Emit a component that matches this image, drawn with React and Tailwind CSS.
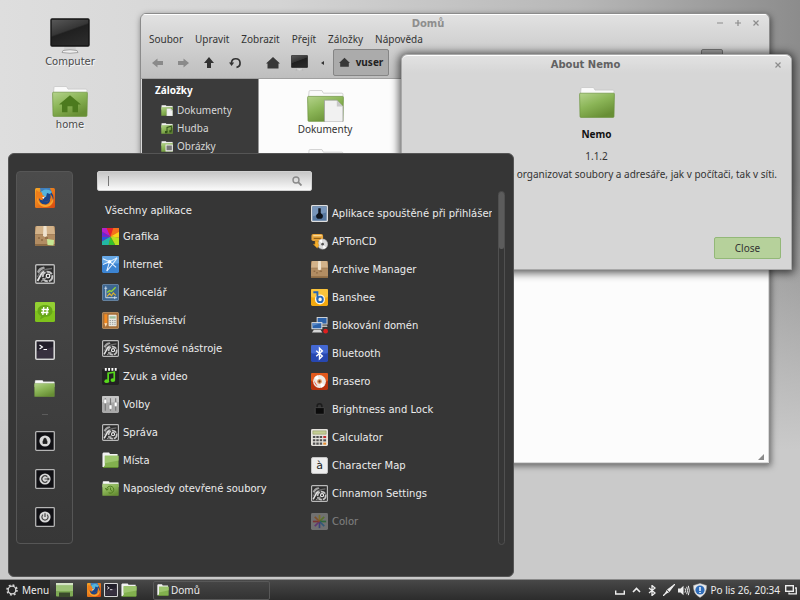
import React from 'react';

const Firefox = ({ size }) => (
  <svg width={size} height={size} viewBox="0 0 20 20">
    <defs>
      <linearGradient id="fxBg" x1="0" y1="0" x2="1" y2="1">
        <stop offset="0" stopColor="#f7a928" />
        <stop offset="1" stopColor="#d9480f" />
      </linearGradient>
    </defs>
    <rect width="20" height="20" rx="1.5" fill="url(#fxBg)" />
    <path d="M5 0H15L17 5L13 9L6 6Z" fill="#3f7fbe" />
    <circle cx="10.5" cy="10" r="8" fill="#1b4486" />
    <path d="M5 5C7 1 13 0 17 4L15 6L12 5L11 9L7 9Z" fill="#54b4dd" />
    <path d="M1 2L4 4L7 4.500L7.500 7L10 8.500L8 10L7.500 12C8.500 14 12 14.500 14 12.500C16 10.500 16 8 15 6C18 8 19 13 15.500 16.500C11 20 3 18.500 1.500 13C.5 9 1 5 1 2Z" fill="#ef7d1a" />
    <path d="M8.500 12C9.500 14.500 13.500 14 15 11C15.500 14 13 16.500 10 16.500C6 16.500 4 13 4 10C5 12 7 12.500 8.500 12Z" fill="#1b4486" />
    <path d="M2 9C3 14 6 17 11 17C14 17 17 14 18 10C19.500 15 15 19.500 10 19C5 18.500 1.500 14 2 9Z" fill="#f9a52e" />
    <path d="M7 9.500L10 8.500L8.500 11Z" fill="#fff" />
  </svg>
);

const Box = ({ size, note }) => (
  <svg width={size} height={size} viewBox="0 0 20 20">
    <rect width="20" height="20" rx="1.5" fill="#b28d63" />
    <path d="M1.500 0H18.500L20 8H0Z" fill="#d3b38a" />
    <path d="M0 8H20V9H0Z" fill="#a5825a" />
    <path d="M8.500 0H11.500L12 10L10 11L8 10Z" fill="#efe3cf" />
    <path d="M3 12H5M6 14H8M10 12H13" stroke="#7a5632" strokeWidth="1" />
    <path d="M0 18H20V18.500A1.500 1.500 0 0 1 18.500 20H1.500A1.500 1.500 0 0 1 0 18.500Z" fill="#8e6c45" />
    {note && <path d="M12 13L19 14L18.500 19.500L12.500 19Z" fill="#c6e693" />}
  </svg>
);

const Gears = ({ size }) => (
  <svg width={size} height={size} viewBox="0 0 20 20">
    <rect x=".7" y=".7" width="18.6" height="18.6" rx="1" fill="#2c2c2c" stroke="#b9b9b9" strokeWidth="1.4" />
    <path d="M2 8C3 5 5 3 9 2.500L10 4.500C8 5 5.500 6 4 9.500Z" fill="#a5a5a5" />
    <path d="M2.500 13C5 7 9 5 17 4.500" fill="none" stroke="#6f6f6f" strokeWidth="1.300" />
    <path d="M2.500 17L6.500 9.500L9 7.500" fill="none" stroke="#e2e2e2" strokeWidth="1.800" />
    <circle cx="12.500" cy="12.500" r="4.800" fill="none" stroke="#c4c4c4" strokeWidth="2" strokeDasharray="6 1" />
    <circle cx="13" cy="12" r="1.800" fill="none" stroke="#eee" strokeWidth="1.300" />
    <path d="M6 17.500L11.500 13.500" stroke="#9a9a9a" strokeWidth="1.400" />
  </svg>
);

const Chat = ({ size }) => (
  <svg width={size} height={size} viewBox="0 0 20 20">
    <rect width="20" height="20" rx="1.500" fill="#7fc31c" />
    <rect width="20" height="9" rx="1.500" fill="#93d032" />
    <path d="M10 3C14.500 3 17.500 5.500 17.500 9C17.500 12.500 14.500 14.800 10 14.800L5 17.500L6 14C4 13 2.500 11.500 2.500 9C2.500 5.500 5.500 3 10 3Z" fill="#68a818" />
    <path d="M8.800 5L7.800 13M12.600 5L11.600 13M6.500 7.500H14M6 10.500H13.500" stroke="#fff" strokeWidth="1.300" />
  </svg>
);

const Terminal = ({ size }) => (
  <svg width={size} height={size} viewBox="0 0 20 20">
    <rect x=".8" y=".8" width="18.400" height="18.400" rx="1" fill="#221f2a" stroke="#d6d6d6" strokeWidth="1.600" />
    <path d="M2 11L18 7V18H2Z" fill="#37303f" />
    <path d="M4.500 5L7.500 7L4.500 9M8.500 9.500H12" fill="none" stroke="#fff" strokeWidth="1.100" />
  </svg>
);

const Power = ({ size, kind }) => (
  <svg width={size} height={size} viewBox="0 0 20 20">
    <rect x=".7" y=".7" width="18.600" height="18.600" rx=".8" fill="#101014" stroke="#b5b5b5" strokeWidth="1.300" />
    <circle cx="10" cy="10" r="5.600" fill="#d9d9d9" />
    {kind === 'lock' && <path d="M8 9.800H12V12.500H8ZM8.700 9.800V8.500A1.300 1.300 0 0 1 11.300 8.500V9.800" fill="#222" stroke="#222" strokeWidth=".8" />}
    {kind === 'logout' && <path d="M12.300 7.700A3.200 3.200 0 1 0 12.300 12.300M9.500 10H14M12.500 8.600L14 10L12.500 11.400" fill="none" stroke="#444" strokeWidth="1.200" />}
    {kind === 'off' && <path d="M8 7.600A3.100 3.100 0 1 0 12 7.600M10 6.200V10" fill="none" stroke="#444" strokeWidth="1.200" />}
  </svg>
);

const Folder = ({ w, h, kind }) => (
  <svg width={w} height={h} viewBox="0 0 36 30" preserveAspectRatio="none">
    <defs>
      <linearGradient id="folderGreen" x1="0" y1="0" x2=".6" y2="1">
        <stop offset="0" stopColor="#b4d38b" />
        <stop offset=".5" stopColor="#8bb557" />
        <stop offset="1" stopColor="#688f35" />
      </linearGradient>
    </defs>
    <path d="M2 1.500Q2 .5 3 .5H14.500L16 3H34Q35 3 35 4V12H1Z" fill="#fafafa" stroke="#c4c4c4" strokeWidth=".7" />
    <path d="M.6 7Q.5 6 1.500 6H34.500Q35.500 6 35.400 7L35 28.500Q35 29.400 34 29.400H2Q1 29.400 1 28.500Z" fill="url(#folderGreen)" stroke="#6d9440" strokeWidth=".7" />
    {kind === 'home' && <path d="M18 9L29 18H26V25.500H20.500V19.500H15.500V25.500H10V18H7Z" fill="#4c7a1e" />}
    {kind === 'doc' && <path d="M17 9.500H29L35 15.500V30H17Z" fill="#f1f1f1" stroke="#9b9b9b" strokeWidth=".7" />}
    {kind === 'doc' && <path d="M29 9.500V15.500H35Z" fill="#c8c8c8" />}
    {kind === 'music' && <path d="M18 25V12L31 9V22" fill="none" stroke="#33521a" strokeWidth="3" />}
    {kind === 'music' && <path d="M12 22H19V28H12ZM25 20H32V26H25Z" fill="#33521a" />}
    {kind === 'photo' && <path d="M15 11H34V27H15Z" fill="#777" stroke="#eee" strokeWidth="3" />}
    {kind === 'recent' && <path d="M10 18A7.500 7 0 1 1 14 23.500M7 14L10 18.500L14 15.500M18 13V18L21 20" fill="none" stroke="#4c7a1e" strokeWidth="2" />}
  </svg>
);

const PlaceFolder = ({ w, h }) => (
  <svg width={w} height={h} viewBox="0 0 18 17" preserveAspectRatio="none">
    <path d="M.5 1.500L1.500 .5H7.500L8.500 2H16.500V16H.5Z" fill="#f2f2f2" />
    <path d="M3 4H17.500V15.500Q17.500 16.500 16.500 16.500H1.500L3 14Z" fill="#82b04e" />
    <path d="M3 4H17.500V9L3 12Z" fill="#9cc56d" />
    <path d="M1 16.500H17" stroke="#5c8a2d" />
  </svg>
);

const Monitor = ({ w, h }) => (
  <svg width={w} height={h} viewBox="0 0 40 36" preserveAspectRatio="none">
    <defs>
      <linearGradient id="screen" x1="0" y1="0" x2=".5" y2="1">
        <stop offset="0" stopColor="#5a5a5a" />
        <stop offset=".5" stopColor="#363636" />
        <stop offset=".55" stopColor="#202020" />
        <stop offset="1" stopColor="#2a2a2a" />
      </linearGradient>
    </defs>
    <path d="M14.500 27H25.500L26 33H14Z" fill="#cfcfcf" />
    <path d="M13 32.500Q20 31 27 32.500L28 34.500Q20 36 12 34.500Z" fill="#efefef" stroke="#8a8a8a" strokeWidth=".7" />
    <rect x="1" y="1" width="38" height="27" rx="1" fill="url(#screen)" stroke="#151515" strokeWidth="1.400" />
  </svg>
);

const House = ({ size }) => (
  <svg width={size} height={size} viewBox="0 0 14 14">
    <path d="M7 1L14 7.500H12.500V12.500H1.500V7.500H0Z" fill="#383838" />
  </svg>
);

const Wheel = () => (
  <svg width="17" height="17" viewBox="0 0 18 18">
    <rect width="18" height="18" rx="1.500" fill="#e22" />
    <path d="M9 9L0 4V0H5Z" fill="#b421c9" />
    <path d="M9 9L5 0H12Z" fill="#e3242b" />
    <path d="M9 9L12 0H18V4Z" fill="#f2711c" />
    <path d="M9 9L18 4V10Z" fill="#f8d21c" />
    <path d="M9 9L18 10V18H14Z" fill="#b8e01f" />
    <path d="M9 9L14 18H7Z" fill="#35c22e" />
    <path d="M9 9L7 18H0V14Z" fill="#22b8a4" />
    <path d="M9 9L0 14V9Z" fill="#2a52e0" />
    <path d="M9 9L0 9V4Z" fill="#6a25d8" />
  </svg>
);

const Net = () => (
  <svg width="17" height="17" viewBox="0 0 18 18">
    <rect width="18" height="18" rx="1.500" fill="#3c84d2" />
    <rect width="18" height="8" rx="1.500" fill="#67a8e6" />
    <path d="M1 3L8 6L16 2M8 6L5 16M8 6L15 12M16 2L11 9L5 16M1 9L8 6" fill="none" stroke="#e6f2ff" strokeWidth="1.100" />
    <circle cx="8" cy="6" r="1.800" fill="#fff" />
  </svg>
);

const Office = () => (
  <svg width="17" height="17" viewBox="0 0 18 18">
    <rect x=".4" y=".4" width="17.200" height="17.200" rx="1.500" fill="#3d6690" stroke="#7b9cbc" strokeWidth=".8" />
    <path d="M4 2.500V14.500H16M2.500 4.500H5.500M13.500 13V16" fill="none" stroke="#cfdcea" strokeWidth="1" />
    <path d="M5.500 9L8 7L10 8L14.500 3.500" fill="none" stroke="#97d637" strokeWidth="1.400" />
    <path d="M5.500 13L8 10L10 12.500L12 9.500L14.500 12" fill="none" stroke="#dfb22e" strokeWidth="1.200" />
  </svg>
);

const Accessories = () => (
  <svg width="17" height="17" viewBox="0 0 18 18">
    <rect x=".4" y=".4" width="17.200" height="17.200" rx="1.500" fill="#a8713b" stroke="#d2a36e" strokeWidth=".8" />
    <path d="M2.500 2.500H5.500V12L4 15.500L2.500 12Z" fill="#f58a1f" />
    <path d="M2.500 12H5.500L4 15.500Z" fill="#f8e2c0" />
    <rect x="7" y="3" width="8.500" height="12" rx=".8" fill="#e8e8e0" />
    <path d="M8 4.500H14.500V7H8Z" fill="#9ebf9b" />
    <path d="M8 9H14.500M8 11H14.500M8 13H14.500" stroke="#999" strokeWidth="1" strokeDasharray="1.500 1" />
  </svg>
);

const Media = () => (
  <svg width="17" height="17" viewBox="0 0 18 18">
    <rect y="1" width="18" height="17" rx="1.500" fill="#222" />
    <path d="M3 1.500H16" stroke="#fff" strokeWidth="3" strokeDasharray="2 1.500" />
    <path d="M6.500 14V5.500L13 4.500V12.500" fill="none" stroke="#57d81c" strokeWidth="1.800" />
    <ellipse cx="5" cy="14" rx="2.500" ry="2" fill="#57d81c" />
    <ellipse cx="11.500" cy="12.800" rx="2.500" ry="2" fill="#57d81c" />
  </svg>
);

const Mixer = () => (
  <svg width="17" height="17" viewBox="0 0 18 18">
    <rect width="18" height="18" rx="1.500" fill="#a9a9a9" />
    <rect width="18" height="7" rx="1.500" fill="#c6c6c6" />
    <path d="M3.500 2.500V15.500M9 2.500V15.500M14.500 2.500V15.500" stroke="#777" strokeWidth="1.200" />
    <path d="M2 3.500H5V8H2ZM7.500 9.500H10.500V14H7.500ZM13 6.500H16V11H13Z" fill="#fff" stroke="#8a8a8a" strokeWidth=".5" />
  </svg>
);

const Startup = () => (
  <svg width="17" height="17" viewBox="0 0 18 18">
    <rect x=".7" y=".7" width="16.600" height="16.600" rx=".8" fill="#56779f" stroke="#dedede" strokeWidth="1.400" />
    <path d="M2 2H16V8L2 12Z" fill="#7795ba" />
    <path d="M7.700 3.500H10.300V8.500L12.500 10.500V13L11 14.500H7L5.500 13V10.500L7.700 8.500Z" fill="#0f141c" />
  </svg>
);

const AptOnCd = () => (
  <svg width="18" height="17" viewBox="0 0 19 18">
    <rect x=".5" y=".5" width="13" height="8" rx="2" fill="#e8a53a" />
    <path d="M2.500 2.500H12" stroke="#fbe0a4" strokeWidth="1.200" />
    <path d="M3 5.500H11" stroke="#8b5a14" strokeWidth="1.200" />
    <circle cx="13" cy="12" r="5.700" fill="#dcdcdc" stroke="#a8a8a8" strokeWidth=".6" />
    <path d="M13 12L9 8L12 6.500ZM13 12L17 16L14 17.500Z" fill="#fff" />
    <circle cx="13" cy="12" r="1.500" fill="#555" />
    <path d="M4.500 8.500V12H2.500L7 16.500L9 13L8 12V8.500Z" fill="#f5b02c" stroke="#b87714" strokeWidth=".5" />
  </svg>
);

const Banshee = () => (
  <svg width="17" height="17" viewBox="0 0 18 18">
    <rect width="18" height="18" rx="1.500" fill="#f3a90f" />
    <rect width="18" height="9" rx="1.500" fill="#fac43c" />
    <circle cx="9.500" cy="11" r="5.300" fill="#fdf6e6" />
    <path d="M2.500 3.500H6.800V11" fill="none" stroke="#2566b8" strokeWidth="2" />
    <circle cx="9.600" cy="11" r="2.900" fill="none" stroke="#2566b8" strokeWidth="2" />
  </svg>
);

const Domains = () => (
  <svg width="18" height="18" viewBox="0 0 18 18">
    <path d="M6 .5H17.500V8.500H6Z" fill="#dadada" />
    <path d="M7 1.500H16.500V7.500H7Z" fill="#2c62aa" />
    <path d="M9 9.500H17L17.500 11H9Z" fill="#bbb" />
    <path d="M.5 6H12V13.500H.5Z" fill="#e8e8e8" />
    <path d="M1.500 7H11V12.500H1.500Z" fill="#2c62aa" />
    <path d="M1.500 7H11L1.500 10Z" fill="#5c8bc9" />
    <path d="M3 14H10L12 17H1Z" fill="#d4d4d4" />
    <circle cx="15.500" cy="15.500" r="2.500" fill="#dd1f1f" />
  </svg>
);

const BluetoothTile = () => (
  <svg width="17" height="17" viewBox="0 0 18 18">
    <rect width="18" height="18" rx="1.500" fill="#2747b0" />
    <rect width="18" height="9" rx="1.500" fill="#4468d2" />
    <path d="M5.500 6L12 11.700L9 14.700V3.300L12 6.300L5.500 12" fill="none" stroke="#fff" strokeWidth="1.500" />
  </svg>
);

const Brasero = () => (
  <svg width="17" height="17" viewBox="0 0 18 18">
    <rect width="18" height="18" rx="1.500" fill="#b8320d" />
    <rect width="18" height="9" rx="1.500" fill="#e2591c" />
    <circle cx="9" cy="9" r="6.800" fill="#eee9e4" />
    <path d="M9 9L3.500 5A6.800 6.800 0 0 1 7 2.500ZM9 9L14.500 13A6.800 6.800 0 0 1 11 15.500Z" fill="#fff" />
    <circle cx="9" cy="9" r="2.600" fill="#e29a64" />
    <circle cx="9" cy="9" r="1.200" fill="#7a3a1a" />
    <path d="M3.500 8C3.500 11 5 13 7 14C6 12 4.500 11 3.500 8Z" fill="#e8301a" />
  </svg>
);

const Padlock = () => (
  <svg width="17" height="17" viewBox="0 0 18 18">
    <path d="M6.500 8V5.500A2.500 2.500 0 0 1 11.500 5.500V8" fill="none" stroke="#1c1c1c" strokeWidth="1.600" />
    <rect x="4.500" y="7" width="9.500" height="7" rx=".8" fill="#0b0b0b" stroke="#5a5a5a" strokeWidth=".7" />
  </svg>
);

const Calc = () => (
  <svg width="17" height="17" viewBox="0 0 18 18">
    <rect width="18" height="18" rx="1.500" fill="#e4e2dc" />
    <path d="M2 2H16V5.500H2Z" fill="#c3cd92" stroke="#8d9663" strokeWidth=".6" />
    <path d="M2 8.500H12.500M2 12H12.500M2 15.500H12.500" stroke="#4e4e4e" strokeWidth="2.200" strokeDasharray="2.600 1" />
    <path d="M13 8.500H16" stroke="#c22f2f" strokeWidth="2.200" />
    <path d="M13 12H16" stroke="#4e4e4e" strokeWidth="2.200" />
    <path d="M13 15.500H16" stroke="#e58a2c" strokeWidth="2.200" />
  </svg>
);

const CharMap = () => (
  <span className="flex h-[17px] w-[17px] items-center justify-center rounded-[2px] border border-[#c4c4c4] bg-[#ededed] text-[11px] leading-none text-[#222] [text-shadow:none]" aria-hidden="true">à</span>
);

const ColorIcon = () => (
  <svg width="17" height="17" viewBox="0 0 18 18">
    <rect width="18" height="18" rx="1.500" fill="#c9c9c9" />
    <path d="M9 9V2" stroke="#e8c21c" strokeWidth="1.800" />
    <path d="M9 9L14 4" stroke="#8ecf1f" strokeWidth="1.800" />
    <path d="M9 9H16" stroke="#27b047" strokeWidth="1.800" />
    <path d="M9 9L14 14" stroke="#2a8fd8" strokeWidth="1.800" />
    <path d="M9 9V16" stroke="#4653d8" strokeWidth="1.800" />
    <path d="M9 9L4 14" stroke="#a236c9" strokeWidth="1.800" />
    <path d="M9 9H2" stroke="#e0312b" strokeWidth="1.800" />
    <path d="M9 9L4 4" stroke="#f07a1e" strokeWidth="1.800" />
  </svg>
);

const categories = [
  { name: 'Grafika', icon: <Wheel /> },
  { name: 'Internet', icon: <Net /> },
  { name: 'Kancelář', icon: <Office /> },
  { name: 'Příslušenství', icon: <Accessories /> },
  { name: 'Systémové nástroje', icon: <Gears size={17} /> },
  { name: 'Zvuk a video', icon: <Media /> },
  { name: 'Volby', icon: <Mixer /> },
  { name: 'Správa', icon: <Gears size={17} /> },
  { name: 'Místa', icon: <PlaceFolder w={17} h={16} /> },
  { name: 'Naposledy otevřené soubory', icon: <Folder w={17} h={15} kind="recent" /> },
];

const apps = [
  { name: 'Aplikace spouštěné při přihlášení', icon: <Startup /> },
  { name: 'APTonCD', icon: <AptOnCd /> },
  { name: 'Archive Manager', icon: <Box size={17} /> },
  { name: 'Banshee', icon: <Banshee /> },
  { name: 'Blokování domén', icon: <Domains /> },
  { name: 'Bluetooth', icon: <BluetoothTile /> },
  { name: 'Brasero', icon: <Brasero /> },
  { name: 'Brightness and Lock', icon: <Padlock /> },
  { name: 'Calculator', icon: <Calc /> },
  { name: 'Character Map', icon: <CharMap /> },
  { name: 'Cinnamon Settings', icon: <Gears size={17} /> },
  { name: 'Color', icon: <ColorIcon />, faded: true },
];

const favorites = [
  { name: 'Firefox', icon: <Firefox size={20} /> },
  { name: 'Software', icon: <Box size={20} note /> },
  { name: 'Settings', icon: <Gears size={20} /> },
  { name: 'XChat', icon: <Chat size={20} /> },
  { name: 'Terminal', icon: <Terminal size={20} /> },
  { name: 'Nemo', icon: <Folder w={21} h={17} /> },
];

const session = [
  { name: 'Lock', icon: <Power size={20} kind="lock" /> },
  { name: 'Logout', icon: <Power size={20} kind="logout" /> },
  { name: 'Quit', icon: <Power size={20} kind="off" /> },
];

const DesktopIcons = () => (
  <div className="ml-9 flex w-[68px] flex-col items-center pt-[18px] font-['DejaVu_Sans',sans-serif] text-[10px] leading-4 text-[#4a4a4a] [text-shadow:1px_1px_1px_#fff]">
    <Monitor w={40} h={36} />
    <span>Computer</span>
    <div className="h-4" />
    <Folder w={36} h={31} kind="home" />
    <span>home</span>
  </div>
);

const TitleButton = ({ label, d }) => (
  <button aria-label={label} className="flex h-4 w-[18px] items-center justify-center">
    <svg width="8" height="8" viewBox="0 0 8 8">
      <path d={d} fill="none" stroke="#8c8c8c" strokeWidth="1.2" />
    </svg>
  </button>
);

const ToolButton = ({ label, children }) => (
  <button aria-label={label} className="flex h-7 w-[26px] items-center justify-center">
    {children}
  </button>
);

const FileManager = () => (
  <section className="absolute top-[13px] left-[140px] z-10 flex h-[451px] w-[630px] flex-col overflow-hidden rounded-t-md border border-[#8b8b8b] bg-linear-to-b from-[#e2e2e2] to-[#bdbdbd] to-[66px] shadow-[1px_2px_6px_rgba(0,0,0,0.5)]">
    <header className="flex h-[17px] items-center border-t border-white pr-1">
      <h2 className="flex-1 pl-1 text-center font-['DejaVu_Sans',sans-serif] text-[10px] font-bold text-[#8e8e8e]">Domů</h2>
      <TitleButton label="Minimize" d="M1 4H7" />
      <TitleButton label="Maximize" d="M1 4H7M4 1V7" />
      <TitleButton label="Close" d="M1.500 1.500L6.500 6.500M6.500 1.500L1.500 6.500" />
    </header>
    <nav className="flex h-4 items-center gap-3 pl-2">
      {['Soubor', 'Upravit', 'Zobrazit', 'Přejít', 'Záložky', 'Nápověda'].map((item) => (
        <button key={item}>{item}</button>
      ))}
    </nav>
    <div className="flex h-8 items-center border-b border-[#a0a0a0] pl-[3px]">
      <ToolButton label="Back">
        <svg width="11" height="10" viewBox="0 0 11 10"><path d="M0 5L5.500 .5V3H11V7H5.500V9.500Z" fill="#8a8a8a" /></svg>
      </ToolButton>
      <ToolButton label="Forward">
        <svg width="11" height="10" viewBox="0 0 11 10"><path d="M11 5L5.500 .5V3H0V7H5.500V9.500Z" fill="#8a8a8a" /></svg>
      </ToolButton>
      <ToolButton label="Up">
        <svg width="10" height="11" viewBox="0 0 10 11"><path d="M5 0L10 6H7V11H3V6H0Z" fill="#333" /></svg>
      </ToolButton>
      <ToolButton label="Reload">
        <svg width="13" height="12" viewBox="0 0 13 12">
          <path d="M2.500 7V5.500A4.300 4.300 0 1 1 7.500 10.300" fill="none" stroke="#333" strokeWidth="1.700" />
          <path d="M0 5.500H5.200L2.600 9Z" fill="#333" />
        </svg>
      </ToolButton>
      <div className="w-3" />
      <ToolButton label="Home"><House size={14} /></ToolButton>
      <ToolButton label="Computer"><Monitor w={17} h={16} /></ToolButton>
      <button aria-label="Previous" className="flex h-7 w-[21px] items-center justify-center">
        <svg width="3" height="4" viewBox="0 0 3 4"><path d="M3 0V4L0 2Z" fill="#333" /></svg>
      </button>
      <button className="flex h-[27px] w-14 items-center justify-center gap-1.5 rounded-xs border border-[#858585] bg-[#ababab] font-bold text-[#222]">
        <House size={11} />
        vuser
      </button>
      <button aria-label="Search" className="mr-[46px] ml-auto h-[27px] w-[22px] rounded-xs border border-[#777] bg-[#a5a5a5]" />
    </div>
    <div className="flex min-h-0 flex-1 border-x border-b border-[#d8d8d8]">
      <aside className="w-[117px] border-r border-[#999] bg-[#3b3b3b] pt-0.5 text-[#d8d8d8]">
        <h3 className="mb-0.5 pl-[13px] leading-[18px] font-bold text-white">Záložky</h3>
        {[['Dokumenty', 'doc'], ['Hudba', 'music'], ['Obrázky', 'photo']].map(([name, kind]) => (
          <a key={name} href="#" className="flex h-[18px] items-center gap-1 pl-[19px]">
            <Folder w={12} h={11} kind={kind} />
            {name}
          </a>
        ))}
      </aside>
      <div className="relative flex flex-1 flex-col bg-[#fcfcfc]">
        <a href="#" className="flex w-[132px] flex-col items-center pt-[11px] leading-[15px] text-[#333]">
          <Folder w={37} h={32} kind="doc" />
          Dokumenty
        </a>
        <div className="flex w-[132px] flex-col items-center pt-3">
          <Folder w={37} h={32} />
        </div>
        <svg className="absolute right-1 bottom-0.5" width="6" height="6" viewBox="0 0 6 6"><path d="M6 0V6H0Z" fill="#8a8a8a" /></svg>
      </div>
    </div>
  </section>
);

const AboutDialog = () => (
  <section className="absolute top-[54px] left-[401px] z-20 flex h-[216px] w-[391px] flex-col rounded-t-md border border-[#a9a9a9] bg-[#d6d6d6] text-[#333] shadow-[0_1px_8px_2px_rgba(0,0,0,0.65)]">
    <header className="flex h-[18px] items-center rounded-t-md border-t border-white bg-linear-to-b from-[#e2e2e2] to-[#d6d6d6] pr-1">
      <h2 className="flex-1 text-center font-['DejaVu_Sans',sans-serif] text-[10px] font-bold text-[#626262]">About Nemo</h2>
      <TitleButton label="Close" d="M1.500 1.500L6.500 6.500M6.500 1.500L1.500 6.500" />
    </header>
    <div className="flex flex-col items-center pt-3.5">
      <Folder w={36} h={31} />
      <h3 className="mt-2 leading-4 font-bold text-[#111]">Nemo</h3>
      <p className="mt-1.5 leading-4">1.1.2</p>
      <p className="mt-0.5 self-end pr-3.5 leading-4 whitespace-nowrap">Nemo vám umožňuje organizovat soubory a adresáře, jak v počítači, tak v síti.</p>
    </div>
    <button className="mt-auto mr-[10px] mb-[10px] h-[22px] w-[67px] self-end rounded-xs border border-[#93b878] bg-[#b6d19b]">Close</button>
  </section>
);

const StartMenu = () => (
  <section className="absolute bottom-0.5 left-2 z-30 flex h-[424px] w-[506px] rounded-md border border-[#555] bg-[#363636] font-['DejaVu_Sans',sans-serif] text-[#ececec] [text-shadow:0_1px_1px_#000]">
    <div className="mt-[17px] ml-[7px] flex h-[373px] w-[57px] flex-col items-center rounded-sm border border-[#565656] bg-linear-to-b from-[#4b4b4b] to-[#373737] pt-[7px]">
      {favorites.map((f) => (
        <button key={f.name} aria-label={f.name} className="flex h-[38px] w-full items-center justify-center">{f.icon}</button>
      ))}
      <hr className="my-[7px] w-1.5 border-[#5c5c5c]" />
      {session.map((f) => (
        <button key={f.name} aria-label={f.name} className="flex h-[38px] w-full items-center justify-center">{f.icon}</button>
      ))}
    </div>
    <div className="ml-6 flex flex-1 flex-col pt-[17px]">
      <label className="flex h-5 w-[215px] items-center rounded-xs border border-[#d0d0d0] bg-linear-to-b from-[#c6c6c6] to-[#fafafa] pr-[9px] pl-[10px]">
        <span className="h-2.5 w-px bg-[#777]" />
        <input type="text" aria-label="Search" className="w-full min-w-0 flex-1 text-[#333] outline-none" />
        <svg width="10" height="10" viewBox="0 0 10 10">
          <circle cx="4" cy="4" r="3" fill="none" stroke="#8a8a8a" strokeWidth="1.400" />
          <path d="M6.200 6.200L9.500 9.500" stroke="#8a8a8a" strokeWidth="1.800" />
        </svg>
      </label>
      <div className="flex h-[354px]">
        <div className="flex w-[214px] flex-col pt-[7px]">
          <button className="h-6 pl-2 text-left">Všechny aplikace</button>
          {categories.map((c) => (
            <button key={c.name} className="flex h-7 items-center gap-1 pl-[5px] text-left whitespace-nowrap">
              <span className="flex w-[17px] justify-center">{c.icon}</span>
              {c.name}
            </button>
          ))}
        </div>
        <div className="flex w-[181px] flex-col overflow-hidden pt-2">
          {apps.map((a) => (
            <button key={a.name} className={'flex h-7 shrink-0 items-center gap-1 text-left whitespace-nowrap' + (a.faded ? ' opacity-40' : '')}>
              <span className="flex w-[17px] shrink-0 justify-center">{a.icon}</span>
              {a.name}
            </button>
          ))}
        </div>
        <div className="ml-1.5 w-[7px] rounded-full border border-[#505050]">
          <div className="h-[57px] rounded-xs bg-[#5c5c5c]" />
        </div>
      </div>
    </div>
  </section>
);

const Taskbar = () => (
  <footer className="flex h-[21px] items-center border-t border-[#8a8a8a] bg-linear-to-b from-[#484848] to-[#2c2c2c] text-[#ececec]">
    <button className="flex h-full w-[50px] items-center gap-1 bg-[#262626] pl-1.5">
      <svg width="12" height="12" viewBox="0 0 12 12">
        <circle cx="6" cy="6" r="5" fill="none" stroke="#d5d5d5" strokeWidth="1.600" strokeDasharray="1.900 2.027" />
        <circle cx="6" cy="6" r="3.800" fill="none" stroke="#d5d5d5" strokeWidth="1.300" />
      </svg>
      Menu
    </button>
    <button aria-label="Show desktop" className="ml-1.5">
      <svg width="17" height="14" viewBox="0 0 17 14">
        <rect width="17" height="13.500" rx=".8" fill="#7fab55" />
        <path d="M0 0H17V2.500H0Z" fill="#d5e3c6" />
        <path d="M0 2.500H17V8H0Z" fill="#9cc276" />
        <path d="M3 9.500H14V14H3Z" fill="#3a4a2b" />
      </svg>
    </button>
    <div className="ml-3.5 flex items-center gap-[3px]">
      <button aria-label="Firefox"><Firefox size={14} /></button>
      <button aria-label="Terminal"><Terminal size={14} /></button>
      <button aria-label="Files"><PlaceFolder w={16} h={14} /></button>
    </div>
    <button className="ml-4 flex h-[19px] w-[117px] items-center gap-0.5 rounded-xs border border-[#585858] bg-linear-to-b from-[#454545] to-[#333] pl-[3px]">
      <PlaceFolder w={12} h={12} />
      Domů
    </button>
    <div className="ml-auto flex items-center gap-[7px] pr-[3px]">
      <svg width="10" height="10" viewBox="0 0 10 10"><path d="M.7 5.500V9H9.300V5.500" fill="none" stroke="#eee" strokeWidth="1.400" /></svg>
      <svg width="9" height="6" viewBox="0 0 9 6"><path d="M1 5L4.500 1.500L8 5" fill="none" stroke="#eee" strokeWidth="1.600" /></svg>
      <svg width="8" height="11" viewBox="0 0 8 11"><path d="M1 3L7 8L4 10.500V.5L7 3L1 8" fill="none" stroke="#eee" strokeWidth="1.300" /></svg>
      <div className="flex items-center gap-[3px]">
        <svg width="12" height="12" viewBox="0 0 12 12">
          <path d="M0 12L3.500 8.500M8.500 3.500L12 0" stroke="#eee" strokeWidth="1.300" />
          <path d="M2 10L3.500 6L6 8.500ZM4 5.500L9.500 1.500L10.500 2.500L6.500 8Z" fill="#eee" />
        </svg>
        <svg width="12" height="11" viewBox="0 0 12 11">
          <path d="M0 3.500H2.500L5.500 .8V10.200L2.500 7.500H0Z" fill="#eee" />
          <path d="M7 3.300Q8.300 5.500 7 7.700M8.700 1.800Q10.500 5.500 8.700 9.200M10.300 .8Q12.500 5.500 10.300 10.200" fill="none" stroke="#eee" strokeWidth="1" />
        </svg>
        <svg width="14" height="15" viewBox="0 0 14 15">
          <path d="M7 .5L13.500 2.500Q14 11 7 14.500Q0 11 .5 2.500Z" fill="#e9e9e9" stroke="#b5b5b5" strokeWidth=".5" />
          <circle cx="7" cy="7" r="4.600" fill="#2f6cb8" />
          <path d="M7 4V8M7 9V10" stroke="#fff" strokeWidth="1.400" />
        </svg>
        <time>Po lis 26, 20:34</time>
        <svg className="ml-0.5" width="12" height="10" viewBox="0 0 12 10">
          <rect x=".7" y=".7" width="7.600" height="5.600" fill="none" stroke="#eee" strokeWidth="1.400" />
          <path d="M10 3H11.300V8.800H4V7.500" fill="none" stroke="#eee" strokeWidth="1.300" />
        </svg>
      </div>
    </div>
  </footer>
);

const App = () => {
  return (
    <main className="flex h-screen flex-col overflow-hidden bg-[linear-gradient(to_bottom,transparent_30%,#cacaca_75%),linear-gradient(to_right,#dedede,#d4d4d4_35%,#b8b8b8_72%,#8c8c8c)] font-['Noto_Sans',sans-serif] text-[10px] text-[#333]">
      <div className="relative min-h-0 flex-1">
        <DesktopIcons />
        <FileManager />
        <AboutDialog />
        <StartMenu />
      </div>
      <Taskbar />
    </main>
  );
};

export default App;
